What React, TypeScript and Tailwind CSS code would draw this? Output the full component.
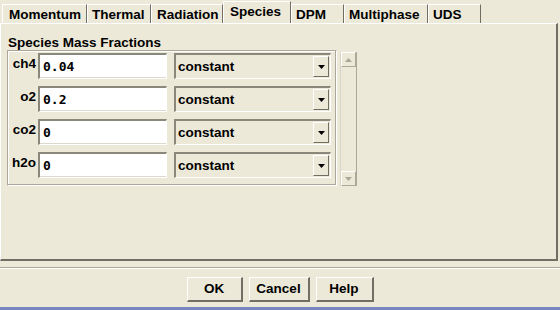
import React from "react";

const tabs = [
  { label: "Momentum", w: 85, pl: 6 },
  { label: "Thermal", w: 64, pl: 4 },
  { label: "Radiation", w: 72, pl: 5 },
  { label: "Species", w: 68, pl: 6, active: true },
  { label: "DPM", w: 53, pl: 4 },
  { label: "Multiphase", w: 84, pl: 4 },
  { label: "UDS", w: 53, pl: 4 },
];

const rows = [
  { name: "ch4", value: "0.04" },
  { name: "o2", value: "0.2" },
  { name: "co2", value: "0" },
  { name: "h2o", value: "0" },
];

function Tri({ down = true, color = "#000" }: { down?: boolean; color?: string }) {
  return (
    <svg width="7" height="4" viewBox="0 0 7 4">
      {down ? <polygon points="0,0 7,0 3.5,4" fill={color} /> : <polygon points="0,4 7,4 3.5,0" fill={color} />}
    </svg>
  );
}

export default function App() {
  return (
    <div
      className="w-[560px] h-[310px] bg-[#ECE9D8] flex flex-col text-black overflow-hidden"
      style={{ fontFamily: '"Liberation Sans", Arial, sans-serif' }}
    >
      {/* tabs */}
      <div className="h-[23px] flex items-end pl-[2px] shrink-0">
        {tabs.map((t) => (
          <div
            key={t.label}
            style={{ width: t.w, paddingLeft: t.pl }}
            className={
              t.active
                ? "h-[22px] flex items-start pt-[2px] text-[13.5px] font-bold leading-[16px] border-t border-l border-white border-r border-r-[#716F64] bg-[#ECE9D8]"
                : "h-[19px] flex items-start pt-[2px] text-[13.5px] font-bold leading-[16px] border-t border-l border-white border-r border-r-[#716F64]"
            }
          >
            {t.label}
          </div>
        ))}
      </div>

      {/* panel */}
      <div className="w-[558px] h-[238px] shrink-0 border-t border-l border-white border-r-2 border-b-2 border-r-[#716F64] border-b-[#716F64] flex flex-col">
        <div className="pl-[7px] pt-[11px] h-[26px] text-[13.5px] font-bold leading-[16px]">
          Species Mass Fractions
        </div>
        <div className="flex pl-[6px] gap-[3px]">
          <div className="w-[330px] h-[136px] border-t border-l border-[#ACA899] border-b border-r border-b-white border-r-white shadow-[inset_-1px_-1px_0_#ACA899,inset_1px_1px_0_#fff] flex flex-col pt-[2px] gap-[7px]">
            {rows.map((r) => (
              <div key={r.name} className="flex h-[26px]">
                <div className="w-[30px] text-right text-[13.5px] font-bold leading-[16px] pt-[3px] pr-[2px]">
                  {r.name}
                </div>
                <div className="w-[129px] h-[26px] bg-white border-t-2 border-l-2 border-[#8a877b] border-b border-r border-b-white border-r-white shadow-[inset_0_-1px_0_#dcd9cc] flex items-center pl-[3px]">
                  <span
                    className="text-[13px] font-bold leading-[14px]"
                    style={{ fontFamily: '"DejaVu Sans Mono", "Liberation Mono", monospace' }}
                  >
                    {r.value}
                  </span>
                </div>
                <div className="ml-[7px] w-[157px] h-[26px] bg-[#ECE9D8] border-t-2 border-l-2 border-[#8a877b] border-b border-r border-b-white border-r-white flex items-center pl-[2px]">
                  <span className="flex-1 text-[13.5px] font-bold leading-[16px] pt-[1px]">constant</span>
                  <div className="w-[16px] h-[21px] mr-[1px] border-t border-l border-white border-b border-r border-b-[#716F64] border-r-[#716F64] flex items-center justify-center">
                    <Tri />
                  </div>
                </div>
              </div>
            ))}
          </div>
          <div className="w-[17px] h-[134px] mt-[2px] flex flex-col border-l border-[#d8d5c7] border-r border-r-[#ACA899]">
            <div className="h-[15px] border-t border-l border-white border-b border-r border-b-[#ACA899] border-r-[#ACA899] flex items-center justify-center">
              <Tri down={false} color="#ACA899" />
            </div>
            <div className="flex-1" />
            <div className="h-[15px] border-t border-l border-white border-b border-r border-b-[#ACA899] border-r-[#ACA899] flex items-center justify-center">
              <Tri color="#ACA899" />
            </div>
          </div>
        </div>
      </div>

      {/* separator */}
      <div className="mt-[6px] h-[2px] border-t border-[#ACA899] border-b border-b-white shrink-0" />

      {/* buttons */}
      <div className="flex justify-center gap-[6px] pt-[8px] shrink-0">
        {[
          { l: "OK", w: 56 },
          { l: "Cancel", w: 61 },
          { l: "Help", w: 58 },
        ].map((b) => (
          <div
            key={b.l}
            style={{ width: b.w }}
            className="h-[25px] border-t border-l border-white border-b-2 border-r-2 border-b-[#716F64] border-r-[#716F64] flex items-center justify-center text-[13.5px] font-bold leading-[16px]"
          >
            {b.l}
          </div>
        ))}
      </div>

      <div className="flex-1" />
      <div className="h-[3px] bg-[#7A86C2] shrink-0" />
    </div>
  );
}
